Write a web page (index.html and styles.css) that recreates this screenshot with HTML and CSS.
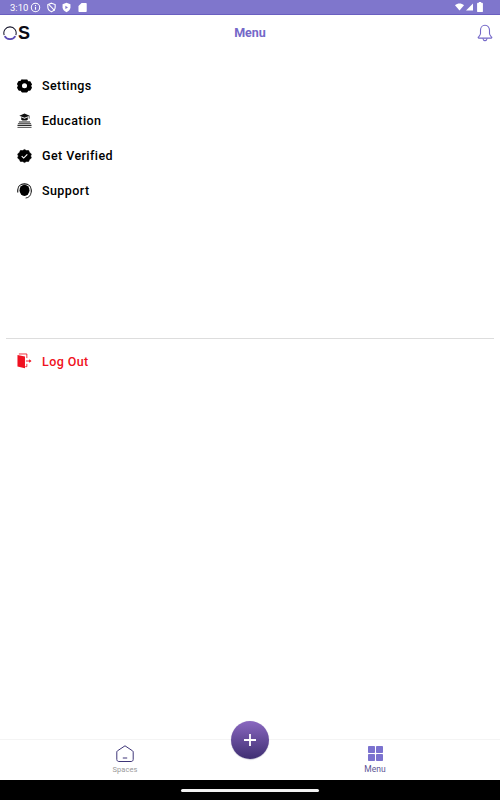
FILE: index.html
```html
<!DOCTYPE html>
<html lang="en">
<head>
<meta charset="utf-8">
<title>Menu</title>
<link rel="stylesheet" href="styles.css">
</head>
<body>
<div class="app">
  <div class="status">
    <div class="status-left">
      <span class="time">3:10</span>
      <svg class="si" viewBox="0 0 12 12"><circle cx="6" cy="6" r="4.600" fill="none" stroke="#fff" stroke-width="1.100"/><path d="M6 5.200v3.200M6 3.400v1" stroke="#fff" stroke-width="1.200"/></svg>
      <svg class="si" viewBox="0 0 12 12"><path d="M6 1.300l4 1.500v3c0 2.400-1.700 4-4 4.900-2.300-.9-4-2.500-4-4.900v-3z" fill="none" stroke="#fff" stroke-width="1.200"/><path d="M3 2.500l6.500 7" stroke="#fff" stroke-width="1.100"/></svg>
      <svg class="si" viewBox="0 0 12 12"><path d="M6 .8l4.300 1.600v3.400c0 2.500-1.800 4.300-4.300 5.400-2.500-1.100-4.300-2.900-4.300-5.400V2.400z" fill="#fff"/><path d="M4.800 4.200l2.800 1.700-2.800 1.700z" fill="#7f76cc"/></svg>
      <svg class="si" viewBox="0 0 12 12"><path d="M5 1h4.800a.8.8 0 0 1 .8.8v8.400a.8.8 0 0 1-.8.8H2.400a.8.8 0 0 1-.8-.8V4.400z" fill="#fff"/></svg>
    </div>
    <div class="status-right">
      <svg class="wifi" viewBox="0 0 12 10"><path d="M0 2.500C3.400-.5 8.600-.5 12 2.500L6 9.500z" fill="#fff"/></svg>
      <svg class="cell" viewBox="0 0 10 10"><path d="M10 0v10H0z" fill="#fff"/></svg>
      <svg class="batt" viewBox="0 0 7 12"><path d="M2.200 0h2.600v1H6a1 1 0 0 1 1 1v9a1 1 0 0 1-1 1H1a1 1 0 0 1-1-1V2a1 1 0 0 1 1-1h1.200z" fill="#fff"/></svg>
    </div>
  </div>

  <header class="topbar">
    <div class="logo">
      <svg class="logo-o" viewBox="0 0 15 15"><path d="M1.300 9.800A6.600 6.600 0 1 1 13.700 9.800" fill="none" stroke="#14142a" stroke-width="1.100"/><path d="M1.800 10.800A6.600 6.600 0 0 0 13.200 10.800" fill="none" stroke="#5b4bb5" stroke-width="1.900"/></svg>
      <span class="logo-s">S</span>
    </div>
    <h1 class="title">Menu</h1>
    <svg class="bell" viewBox="0 0 16 18"><path d="M8 1.300c-2.800 0-4.500 2.200-4.500 5v3.200c0 1.500-1.200 2.500-2.200 3.700-.3.400 0 .9.500.9h12.400c.5 0 .8-.5.500-.9-1-1.200-2.200-2.200-2.200-3.700V6.300c0-2.800-1.700-5-4.500-5z" fill="none" stroke="#7468c8" stroke-width="1.100"/><path d="M5.800 14.300c.4 1.500 1.200 2.300 2.200 2.300s1.800-.8 2.200-2.300" fill="none" stroke="#7468c8" stroke-width="1.100"/></svg>
  </header>

  <nav class="menu">
    <a class="item">
      <svg class="ic" viewBox="0 0 16 16"><path fill-rule="evenodd" d="M5.300.6h5.400c.4 0 .7.200.9.500l.9 1.500 1.800.1c.4 0 .7.200.9.500l1.500 2.700c.2.300.2.700 0 1L15.800 8l.9 1.600c.2.300.2.700 0 1l-1.500 2.700c-.2.300-.5.500-.9.500l-1.800.1-.9 1.500c-.2.300-.5.500-.9.500H5.300c-.4 0-.7-.2-.9-.5l-.9-1.500-1.800-.1c-.4 0-.7-.2-.9-.5L-.7 10.600c-.2-.3-.2-.7 0-1L.2 8-.7 6.400c-.2-.3-.2-.7 0-1L.8 2.700c.2-.3.5-.5.900-.5l1.800-.1.900-1.500c.2-.3.500-.5.900-.5zM8 5a3 3 0 1 0 0 6 3 3 0 0 0 0-6z" fill="#000" transform="translate(.8 .6) scale(.9)"/></svg>
      <span>Settings</span>
    </a>
    <a class="item">
      <svg class="ic" viewBox="0 0 16 16"><path d="M8 0L13.500 2.300 8 4.600 2.500 2.300z" fill="#111"/><path d="M4.500 4v2.600c1 1.200 6 1.200 7 0V4L8 5.600z" fill="#111"/><path d="M13 2.500v3" stroke="#111" stroke-width=".7"/><path d="M2 8.500h12v1.100H2z" fill="#222"/><path d="M1 10.200h14v1.100H1z" fill="#555"/><path d="M.5 12h15v1.300H.5z" fill="#222"/><path d="M.5 14.200h15v1.300H.5z" fill="#666"/></svg>
      <span>Education</span>
    </a>
    <a class="item">
      <svg class="ic" viewBox="0 0 16 16"><path d="M8 1l2 1.200 2.400-.1 1 2.200 1.900 1.500-.7 2.200.7 2.200-1.900 1.500-1 2.200-2.400-.1L8 15l-2-1.200-2.400.1-1-2.200L.7 10.200 1.400 8 .7 5.800l1.900-1.500 1-2.200L6 2.200z" fill="#000" stroke="#000" stroke-width=".6" stroke-linejoin="round"/><path d="M5 8.100l2.100 2.100 3.900-4" fill="none" stroke="#fff" stroke-width="1.200"/></svg>
      <span>Get Verified</span>
    </a>
    <a class="item">
      <svg class="ic" viewBox="0 0 16 16"><ellipse cx="8" cy="7.300" rx="5.300" ry="6" fill="#000"/><path d="M.8 9.500V6.800C.8 3 3.800.4 8 .4s7.200 2.600 7.200 6.400v2.700" fill="none" stroke="#000" stroke-width="1.100"/><path d="M15 9.500c-.2 3.500-2.500 5.700-5.800 6" fill="none" stroke="#000" stroke-width=".9"/></svg>
      <span>Support</span>
    </a>
  </nav>

  <div class="divider"></div>

  <a class="item logout">
    <svg class="ic" viewBox="0 0 16 16"><path d="M.5 1.500L8.500 3.300v12.400L.5 13.800z" fill="#f01020"/><path d="M2 .5h8.500v4.400M10.500 11v3H8.800" fill="none" stroke="#f01020" stroke-width=".9"/><path d="M9.500 8h4.600" stroke="#f01020" stroke-width="1"/><path d="M13 6.200l2.500 1.800-2.500 1.800z" fill="#f01020"/></svg>
    <span>Log Out</span>
  </a>

  <div class="spacer"></div>

  <footer class="tabs">
    <div class="tab">
      <svg class="tab-ic" viewBox="0 0 18 18"><path d="M9 .8l7.600 5.100c.4.300.6.700.6 1.200v7.400c0 1.100-.9 2-2 2H2.800c-1.100 0-2-.9-2-2V7.100c0-.5.200-.9.600-1.200z" fill="none" stroke="#3e3578" stroke-width="1"/><path d="M6.800 13h4.400" stroke="#3e3578" stroke-width="1"/></svg>
      <span class="tab-label">Spaces</span>
    </div>
    <div class="tab">
      <svg class="tab-grid" viewBox="0 0 15 15"><rect width="7" height="7" rx=".8" fill="#7b72cf"/><rect x="8" width="7" height="7" rx=".8" fill="#7b72cf"/><rect y="8" width="7" height="7" rx=".8" fill="#7b72cf"/><rect x="8" y="8" width="7" height="7" rx=".8" fill="#7b72cf"/></svg>
      <span class="tab-label active">Menu</span>
    </div>
    <button class="fab" aria-label="Add"><svg viewBox="0 0 14 14" class="plus"><path d="M7 1v12M1 7h12" stroke="#fff" stroke-width="1.800"/></svg></button>
  </footer>

  <div class="navbar"><div class="handle"></div></div>
</div>
</body>
</html>
```

FILE: styles.css
```css
* { box-sizing: border-box; }
html, body { margin: 0; padding: 0; }
body { width: 500px; height: 800px; background: #fff; font-family: Roboto, "Liberation Sans", sans-serif; overflow: hidden; }
.app { display: flex; flex-direction: column; height: 800px; }

.status { height: 15px; flex: none; background: #7f76cc; border-bottom: 1px solid #6a5fc0; display: flex; justify-content: space-between; align-items: center; padding: 0 17px 0 10px; color: #fff; }
.status-left { display: flex; align-items: center; gap: 2px; }
.time { font-size: 9.500px; }
.si { width: 11px; height: 11px; display: block; margin-right: 2.500px; }
.status-right { display: flex; align-items: center; gap: 2px; }
.wifi { width: 9px; height: 8px; }
.cell { width: 7px; height: 8px; margin-right: 2px; }
.batt { width: 6px; height: 10px; }

.topbar { height: 36px; flex: none; position: relative; display: flex; align-items: center; justify-content: space-between; padding: 0 7px 0 3px; }
.logo { display: flex; align-items: center; height: 20px; }
.logo-o { width: 14px; height: 14px; display: block; }
.logo-s { font-family: "Liberation Sans", sans-serif; font-size: 18px; font-weight: 700; line-height: 20px; color: #0b0b14; margin-left: 1px; }
.title { position: absolute; left: 0; right: 0; top: 0; margin: 0; text-align: center; font-size: 12.500px; font-weight: 700; line-height: 36px; color: #7468c8; }
.bell { width: 16px; height: 18px; display: block; }

.menu { padding-top: 17px; display: flex; flex-direction: column; flex: none; }
.item { height: 35px; display: flex; align-items: center; padding-left: 17px; gap: 10px; font-size: 12.500px; font-weight: 500; letter-spacing: .42px; color: #000; }
.ic { width: 15px; height: 16px; display: block; flex: none; }

.divider { height: 1px; background: #dddddd; margin: 130px 6px 4.500px; flex: none; }
.logout { color: #f01020; }

.spacer { flex: 1; }

.tabs { height: 41px; flex: none; border-top: 1px solid #f4f4f4; display: grid; grid-template-columns: 1fr 1fr; position: relative; background: #fff; }
.tab { display: flex; flex-direction: column; align-items: center; padding-top: 5px; }
.tab-ic { width: 18px; height: 18px; display: block; }
.tab-grid { width: 15px; height: 15px; display: block; margin: 1px 0 2px; }
.tab-label { font-size: 7.500px; line-height: 10px; margin-top: 2px; color: #9a9a9a; letter-spacing: .1px; }
.tab-label.active { color: #5d5596; font-size: 8.500px; margin-top: 1px; }
.fab { position: absolute; left: 231px; top: -19px; width: 38px; height: 38px; border-radius: 50%; border: 0; padding: 0; background: linear-gradient(#8a68c0, #3f2f72); box-shadow: 0 .5px 1px rgba(40,30,90,.4); display: flex; align-items: center; justify-content: center; }
.plus { width: 14px; height: 14px; display: block; }

.navbar { height: 20px; flex: none; background: #000; display: flex; justify-content: center; padding-top: 9px; }
.handle { width: 138px; height: 3px; border-radius: 2px; background: #f2f2f2; }
```
